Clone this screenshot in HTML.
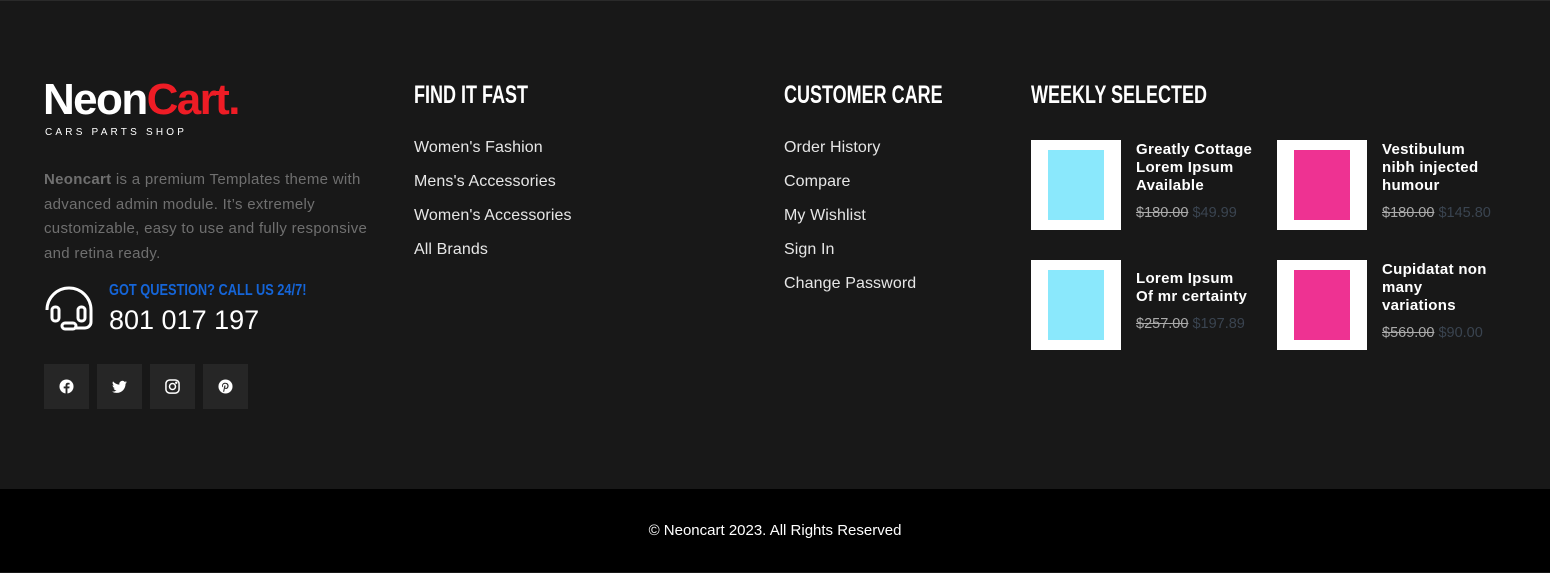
<!DOCTYPE html>
<html><head><style>
*{margin:0;padding:0;box-sizing:border-box}
body{width:1550px;height:572px;background:#181818;font-family:"Liberation Sans",sans-serif;position:relative;overflow:hidden}
.a{position:absolute}
.h{font-family:"Liberation Sans Narrow","Liberation Sans",sans-serif;font-weight:bold;font-size:25px;color:#fff;transform:scaleX(.72);transform-origin:left;white-space:nowrap}
.l{font-size:16px;color:#e6e6e6;line-height:34px;letter-spacing:.1px}
.th{position:absolute;width:90px;height:90px;background:#fff}
.th i{position:absolute;left:17px;top:10px;width:56px;height:70px}
.t{position:absolute;width:122px;font-size:15px;font-weight:bold;color:#fff;line-height:18px;letter-spacing:.3px}
.p{font-size:14.5px;font-weight:normal;margin-top:9px;color:#3a4450;letter-spacing:0}
.p s{color:#aaa}
.s{position:absolute;top:364px;width:45px;height:45px;background:#262626}
.s svg{position:absolute;left:15px;top:15px}
</style></head><body>
<div class="a" style="left:0;top:0;width:1550px;height:1px;background:#2a2a2a"></div>
<div class="a" style="left:43px;top:75px;font-size:44px;font-weight:bold;letter-spacing:-1.6px;color:#fff">Neon<span style="color:#ee1c25">Cart.</span></div>
<div class="a" style="left:45px;top:127px;font-size:10px;letter-spacing:3.2px;color:#fff">CARS PARTS SHOP</div>
<div class="a" style="left:44px;top:168px;width:335px;font-size:15px;line-height:24.5px;color:#6f6f6f;letter-spacing:.3px"><b>Neoncart</b> is a premium Templates theme with advanced admin module. It’s extremely customizable, easy to use and fully responsive and retina ready.</div>
<svg class="a" style="left:44px;top:282px" width="50" height="50" viewBox="0 0 50 50" fill="none" stroke="#fff" stroke-width="3"><path d="M3 28 A22 22 0 0 1 47 28 V40 A6 6 0 0 1 41 46 H30"/><rect x="8" y="25" width="7" height="14" rx="3"/><rect x="34" y="25" width="7" height="14" rx="3"/><rect x="18" y="41" width="14" height="6" rx="3"/></svg>
<div class="a h" style="left:109px;top:282px;font-size:16px;color:#1565d8;transform:scaleX(.8)">GOT QUESTION? CALL US 24/7!</div>
<div class="a" style="left:109px;top:305px;font-size:27px;color:#fff">801 017 197</div>
<div class="s" style="left:44px"><svg width="15" height="15" viewBox="0 0 16 16"><circle cx="8" cy="8" r="7.5" fill="#fff"/><path d="M9 16V10h2l.3-2H9V6.8c0-.6.2-1 1-1h1.3V4.1A16 16 0 0 0 9.5 4C8 4 7 4.9 7 6.6V8H5v2h2v6z" fill="#262626"/></svg></div>
<div class="s" style="left:97px"><svg width="15" height="15" viewBox="0 0 16 16"><path fill="#fff" d="M16 3.5a6.5 6.5 0 0 1-1.9.5 3.3 3.3 0 0 0 1.4-1.8 6.6 6.6 0 0 1-2 .8A3.3 3.3 0 0 0 7.9 6 9.3 9.3 0 0 1 1.1 2.5a3.3 3.3 0 0 0 1 4.4 3.3 3.3 0 0 1-1.5-.4 3.3 3.3 0 0 0 2.6 3.2 3.3 3.3 0 0 1-1.5.1 3.3 3.3 0 0 0 3.1 2.3A6.6 6.6 0 0 1 0 13.4 9.3 9.3 0 0 0 5 14.8c6 0 9.4-5 9.4-9.4V5a6.7 6.7 0 0 0 1.6-1.5z"/></svg></div>
<div class="s" style="left:150px"><svg width="15" height="15" viewBox="0 0 16 16" fill="none" stroke="#fff" stroke-width="1.6"><rect x="1" y="1" width="14" height="14" rx="4"/><circle cx="8" cy="8" r="3.2"/><circle cx="12" cy="4" r=".5" fill="#fff"/></svg></div>
<div class="s" style="left:203px"><svg width="15" height="15" viewBox="0 0 16 16"><circle cx="8" cy="8" r="7.5" fill="#fff"/><path d="M7.5 4C10 4 11.3 5.5 11.3 7.2 11.3 9.3 10 10.6 8.6 10.6 8 10.6 7.5 10.3 7.3 10L6.6 13.6H5.4L6.6 8.3C6.4 7.7 6.8 6.8 7.5 6.8 8.5 6.8 7.7 8.4 7.7 8.9 7.8 9.5 8.3 9.6 8.7 9.5 9.7 9.2 10.1 7.9 10 7 9.8 5.6 8.6 5 7.5 5.1 5.9 5.2 5 6.5 5.3 7.8 5.4 8.2 5.7 8.3 5.5 8.9 4.5 8.6 4.2 7.7 4.3 6.8 4.5 5.2 5.8 4 7.5 4z" fill="#262626"/></svg></div>
<div class="a h" style="left:414px;top:81px">FIND IT FAST</div>
<div class="a l" style="left:414px;top:131px">Women's Fashion<br>Mens's Accessories<br>Women's Accessories<br>All Brands</div>
<div class="a h" style="left:784px;top:81px">CUSTOMER CARE</div>
<div class="a l" style="left:784px;top:131px">Order History<br>Compare<br>My Wishlist<br>Sign In<br>Change Password</div>
<div class="a h" style="left:1031px;top:81px">WEEKLY SELECTED</div>
<div class="th" style="left:1031px;top:140px"><i style="background:#8ae8fc"></i></div>
<div class="t" style="left:1136px;top:141px">Greatly Cottage Lorem Ipsum Available<div class="p"><s>$180.00</s> $49.99</div></div>
<div class="th" style="left:1277px;top:140px"><i style="background:#ee3292"></i></div>
<div class="t" style="left:1382px;top:141px;width:110px">Vestibulum nibh injected humour<div class="p"><s>$180.00</s> $145.80</div></div>
<div class="th" style="left:1031px;top:260px"><i style="background:#8ae8fc"></i></div>
<div class="t" style="left:1136px;top:270px;width:118px">Lorem Ipsum Of mr certainty<div class="p"><s>$257.00</s> $197.89</div></div>
<div class="th" style="left:1277px;top:260px"><i style="background:#ee3292"></i></div>
<div class="t" style="left:1382px;top:261px;width:115px">Cupidatat non many variations<div class="p"><s>$569.00</s> $90.00</div></div>
<div class="a" style="left:0;top:489px;width:1550px;height:83px;background:#000;color:#fff;font-size:15px;text-align:center;line-height:84px">© Neoncart 2023. All Rights Reserved</div>
</body></html>
